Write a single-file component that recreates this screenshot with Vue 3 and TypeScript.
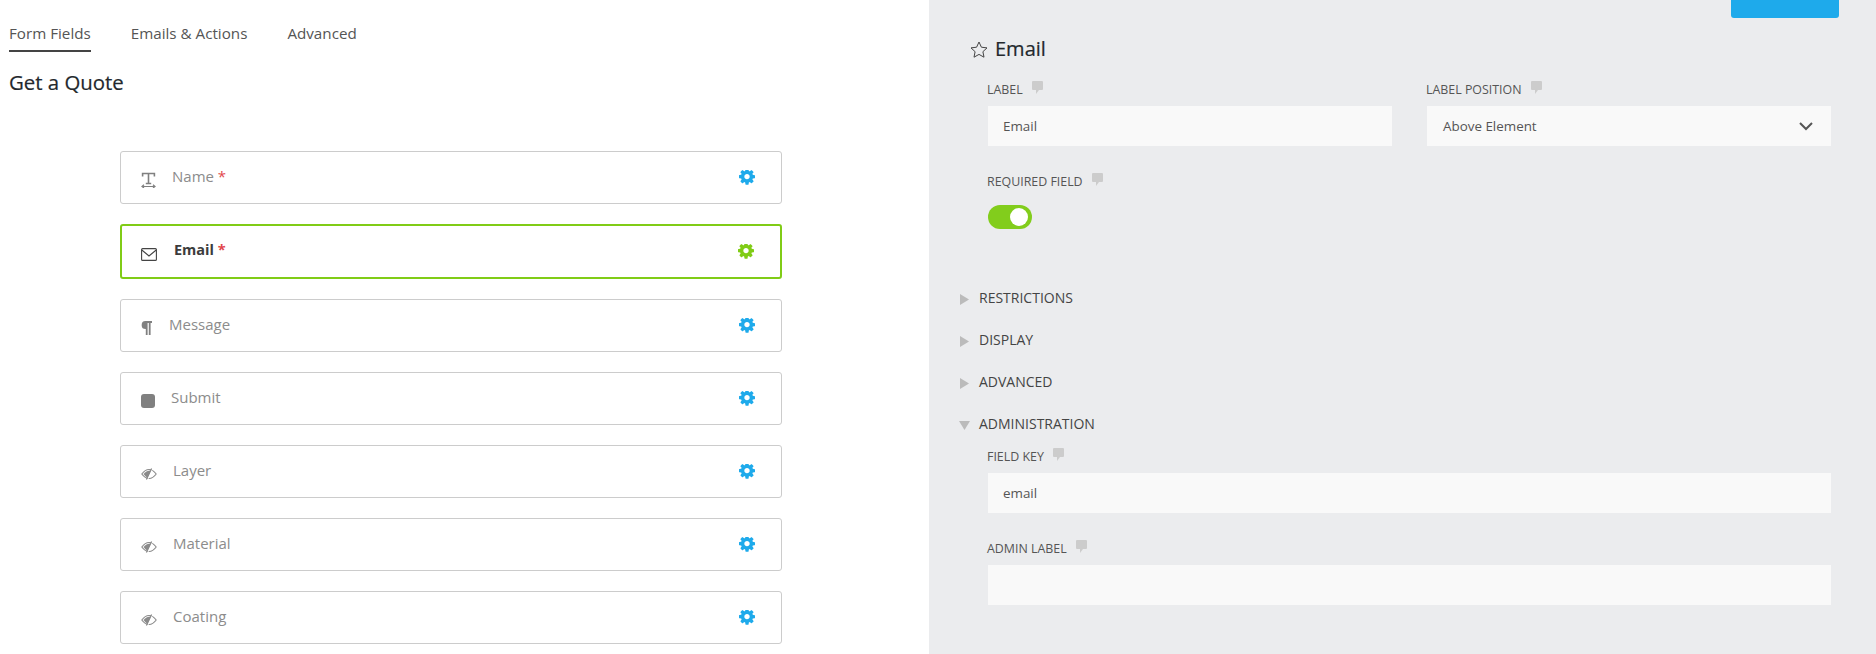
<script setup lang="ts">
interface Field { name: string; icon: string; required?: boolean; active?: boolean }
const tabs = ['Form Fields', 'Emails & Actions', 'Advanced']
const fields: Field[] = [
  { name: 'Name', icon: 'text', required: true },
  { name: 'Email', icon: 'mail', required: true, active: true },
  { name: 'Message', icon: 'para' },
  { name: 'Submit', icon: 'square' },
  { name: 'Layer', icon: 'eye' },
  { name: 'Material', icon: 'eye' },
  { name: 'Coating', icon: 'eye' },
]
const sections = ['RESTRICTIONS', 'DISPLAY', 'ADVANCED']
const cog = 'M1024 640q0-106-75-181t-181-75-181 75-75 181 75 181 181 75 181-75 75-181zm512-109v222q0 12-8 23t-20 13l-185 28q-19 54-39 91 35 50 107 138 10 12 10 25t-9 23q-27 37-99 108t-94 71q-12 0-26-9l-138-108q-44 23-91 38-16 136-29 186-7 28-36 28h-222q-14 0-24.5-8.5t-11.5-21.5l-28-184q-49-16-90-37l-141 107q-10 9-25 9-14 0-25-11-126-114-165-168-7-10-7-23 0-12 8-23 15-21 51-66.5t54-70.5q-27-50-41-99l-183-27q-13-2-21-12.5t-8-23.5v-222q0-12 8-23t19-13l186-28q14-46 39-92-40-57-107-138-10-12-10-24 0-10 9-23 26-36 98.5-107.5t94.5-71.5q13 0 26 10l138 107q44-23 91-38 16-136 29-186 7-28 36-28h222q14 0 24.5 8.5t11.5 21.5l28 184q49 16 90 37l142-107q9-9 24-9 13 0 25 10 129 119 165 170 7 8 7 22 0 12-8 23-15 21-51 66.5t-54 70.5q26 50 41 98l183 28q13 2 21 12.5t8 23.5z'
</script>

<template>
  <div class="page">
    <section class="left">
      <nav class="tabs">
        <span v-for="(t, i) in tabs" :key="t" class="tab" :class="{ on: i === 0 }">{{ t }}</span>
      </nav>
      <h1 class="form-title">Get a Quote</h1>
      <div class="cards">
        <div v-for="f in fields" :key="f.name" class="card" :class="[f.icon, { active: f.active }]">
          <svg v-if="f.icon === 'text'" class="ico" width="15" height="16" viewBox="0 0 15 16" fill="none" stroke="#808080">
            <path d="M1.6 4.5V1.5H13.4V4.5M7.5 1.5V11.5M4.8 11.5H10.2" stroke-width="1.6" />
            <path d="M1 14.5H14M3 12.8L1 14.5L3 16M12 12.8L14 14.5L12 16" stroke-width="1.2" />
          </svg>
          <svg v-else-if="f.icon === 'mail'" class="ico" width="16" height="13" viewBox="0 0 16 13" fill="none" stroke="#444">
            <rect x="0.6" y="0.6" width="14.8" height="11.8" rx="1" stroke-width="1.1" />
            <path d="M0.8 2L8 8L15.2 2" stroke-width="1.1" />
          </svg>
          <svg v-else-if="f.icon === 'para'" class="ico" width="11" height="14" viewBox="0 0 11 14" fill="#808080">
            <path d="M4.5 0H11V2H9.6V14H7.8V2H6.6V14H4.8V8A4 4 0 0 1 4.5 0Z" />
          </svg>
          <span v-else-if="f.icon === 'square'" class="ico sq"></span>
          <svg v-else class="ico" width="16" height="12" viewBox="0 0 16 12" fill="none">
            <path d="M0.8 6C3 3 5.5 1.5 8 1.5S13 3 15.2 6C13 9 10.5 10.5 8 10.5S3 9 0.8 6Z" stroke="#8a8a8a" stroke-width="1.1" />
            <path d="M2.5 6C4.5 3.5 7 2.4 10 2.4L6.5 10C5 9 3.8 7.6 2.5 6Z" fill="#8a8a8a" />
            <path d="M11.8 0L6.5 12" stroke="#fff" stroke-width="1" />
            <path d="M10.6 0.5L5.4 11.5" stroke="#8a8a8a" stroke-width="1.2" />
          </svg>
          <span class="fname">{{ f.name }}<b v-if="f.required" class="req"> *</b></span>
          <svg class="cog" width="16" height="16" viewBox="0 0 1536 1536"><path :d="cog" /></svg>
        </div>
      </div>
    </section>

    <aside class="panel">
      <div class="topbar"><span class="save"></span></div>
      <h2 class="ptitle">
        <svg width="18" height="17" viewBox="0 0 18 17" fill="none" stroke="#444" stroke-width="1">
          <path d="M9 1L11.4 6.2L17 6.9L12.9 10.7L14 16.2L9 13.4L4 16.2L5.1 10.7L1 6.9L6.6 6.2Z" />
        </svg>
        Email
      </h2>

      <div class="body">
        <div class="two">
          <div>
            <label class="lbl">LABEL <svg class="tip" width="11" height="13" viewBox="0 0 11 13"><path d="M1 0H10A1 1 0 0 1 11 1V8A1 1 0 0 1 10 9H7L4 13V9H1A1 1 0 0 1 0 8V1A1 1 0 0 1 1 0Z" /></svg></label>
            <div class="input">Email</div>
          </div>
          <div>
            <label class="lbl">LABEL POSITION <svg class="tip" width="11" height="13" viewBox="0 0 11 13"><path d="M1 0H10A1 1 0 0 1 11 1V8A1 1 0 0 1 10 9H7L4 13V9H1A1 1 0 0 1 0 8V1A1 1 0 0 1 1 0Z" /></svg></label>
            <div class="input select">
              Above Element
              <svg width="14" height="9" viewBox="0 0 14 9" fill="none" stroke="#555" stroke-width="2"><path d="M1 1L7 7L13 1" /></svg>
            </div>
          </div>
        </div>

        <label class="lbl gap">REQUIRED FIELD <svg class="tip" width="11" height="13" viewBox="0 0 11 13"><path d="M1 0H10A1 1 0 0 1 11 1V8A1 1 0 0 1 10 9H7L4 13V9H1A1 1 0 0 1 0 8V1A1 1 0 0 1 1 0Z" /></svg></label>
        <div class="toggle"><span class="knob"></span></div>
      </div>

      <div class="sections">
        <div v-for="s in sections" :key="s" class="sec">
          <svg width="9" height="11" viewBox="0 0 9 11" fill="#bbb"><path d="M0 0L9 5.5L0 11Z" /></svg>
          {{ s }}
        </div>
        <div class="sec">
          <svg class="open" width="11" height="9" viewBox="0 0 11 9" fill="#bbb"><path d="M0 0H11L5.5 9Z" /></svg>
          ADMINISTRATION
        </div>
      </div>

      <div class="admin">
        <label class="lbl">FIELD KEY <svg class="tip" width="11" height="13" viewBox="0 0 11 13"><path d="M1 0H10A1 1 0 0 1 11 1V8A1 1 0 0 1 10 9H7L4 13V9H1A1 1 0 0 1 0 8V1A1 1 0 0 1 1 0Z" /></svg></label>
        <div class="input">email</div>
        <label class="lbl gap">ADMIN LABEL <svg class="tip" width="11" height="13" viewBox="0 0 11 13"><path d="M1 0H10A1 1 0 0 1 11 1V8A1 1 0 0 1 10 9H7L4 13V9H1A1 1 0 0 1 0 8V1A1 1 0 0 1 1 0Z" /></svg></label>
        <div class="input"></div>
      </div>
    </aside>
  </div>
</template>

<style>
html, body { margin: 0; background: #fff; }
</style>

<style scoped>
.page {
  display: flex;
  height: 654px;
  overflow: hidden;
  font-family: "Open Sans", "Liberation Sans", sans-serif;
}
.left { width: 929px; flex: none; padding-left: 9px; box-sizing: border-box; }
.tabs { display: flex; gap: 40px; padding-top: 22px; }
.tab {
  font-size: 15.2px;
  line-height: 22px;
  color: #555;
  padding-bottom: 6px;
  border-bottom: 2px solid transparent;
}
.tab.on { border-bottom-color: #444; }
.form-title {
  margin: 17px 0 0;
  font-size: 20.4px;
  line-height: 26px;
  font-weight: 400;
  color: #23282d;
  -webkit-text-stroke: 0.2px #23282d;
}
.cards {
  width: 662px;
  margin: 56px 0 0 111px;
  display: flex;
  flex-direction: column;
  gap: 20px;
}
.card {
  height: 53px;
  box-sizing: border-box;
  border: 1px solid #ccc;
  border-radius: 3px;
  display: flex;
  align-items: center;
  padding: 0 26px 0 20px;
  background: #fff;
  color: #8c8c8c;
  font-size: 15px;
}
.card.active {
  height: 55px;
  border: 2px solid #80cc16;
  padding: 0 26px 0 19px;
  color: #3c3c3c;
  font-weight: 700;
  font-size: 14.5px;
}
.ico { flex: none; margin-top: 5px; }
.fname { flex: 1; margin-left: 16px; margin-top: -4px; }
.mail .fname { margin-left: 17px; }
.para .fname { margin-left: 17px; }
.req { color: #e2474c; font-weight: 400; }
.active .req { font-weight: 700; }
.sq { width: 14px; height: 14px; border-radius: 3px; background: #808080; }
.cog { flex: none; fill: #1eaaeb; }
.active .cog { fill: #80cc16; }

.panel { flex: 1; background: #ebecee; }
.topbar { display: flex; justify-content: flex-end; padding-right: 37px; }
.save {
  width: 108px;
  height: 18px;
  background: #1eaaeb;
  border-radius: 0 0 3px 3px;
}
.ptitle {
  margin: 19px 0 0 41px;
  display: flex;
  align-items: center;
  gap: 7px;
  font-size: 20px;
  line-height: 24px;
  font-weight: 400;
  color: #23282d;
  -webkit-text-stroke: 0.2px #23282d;
}
.body, .admin { padding: 0 45px 0 59px; }
.body { margin-top: 20px; }
.two { display: grid; grid-template-columns: 404px 404px; gap: 35px; }
.lbl {
  display: flex;
  align-items: flex-start;
  height: 16px;
  font-size: 12.4px;
  line-height: 17px;
  color: #555;
  margin-left: -1px;
  white-space: pre;
}
.tip { fill: #ccc; margin: 0 0 0 6px; }
.input {
  height: 40px;
  margin-top: 9px;
  background: #f9f9f9;
  display: flex;
  align-items: center;
  padding: 0 15px;
  box-sizing: border-box;
  font-size: 13.4px;
  color: #555;
}
.select { justify-content: space-between; padding: 0 18px 0 16px; }
.gap { margin-top: 27px; }
.toggle {
  width: 44px;
  height: 24px;
  margin-top: 16px;
  border-radius: 12px;
  background: #82cd1c;
  display: flex;
  align-items: center;
  justify-content: flex-end;
  padding-right: 4px;
  box-sizing: border-box;
}
.knob { width: 18px; height: 18px; border-radius: 50%; background: #fff; }
.sections {
  margin: 59px 0 0 31px;
  display: flex;
  flex-direction: column;
  gap: 22px;
}
.sec {
  display: flex;
  align-items: center;
  gap: 10px;
  font-size: 14px;
  line-height: 20px;
  color: #444;
}
.sec svg { flex: none; margin-top: 2px; }
.sec svg.open { margin-left: -1px; margin-right: -1px; }
.admin { margin-top: 14px; }
</style>
